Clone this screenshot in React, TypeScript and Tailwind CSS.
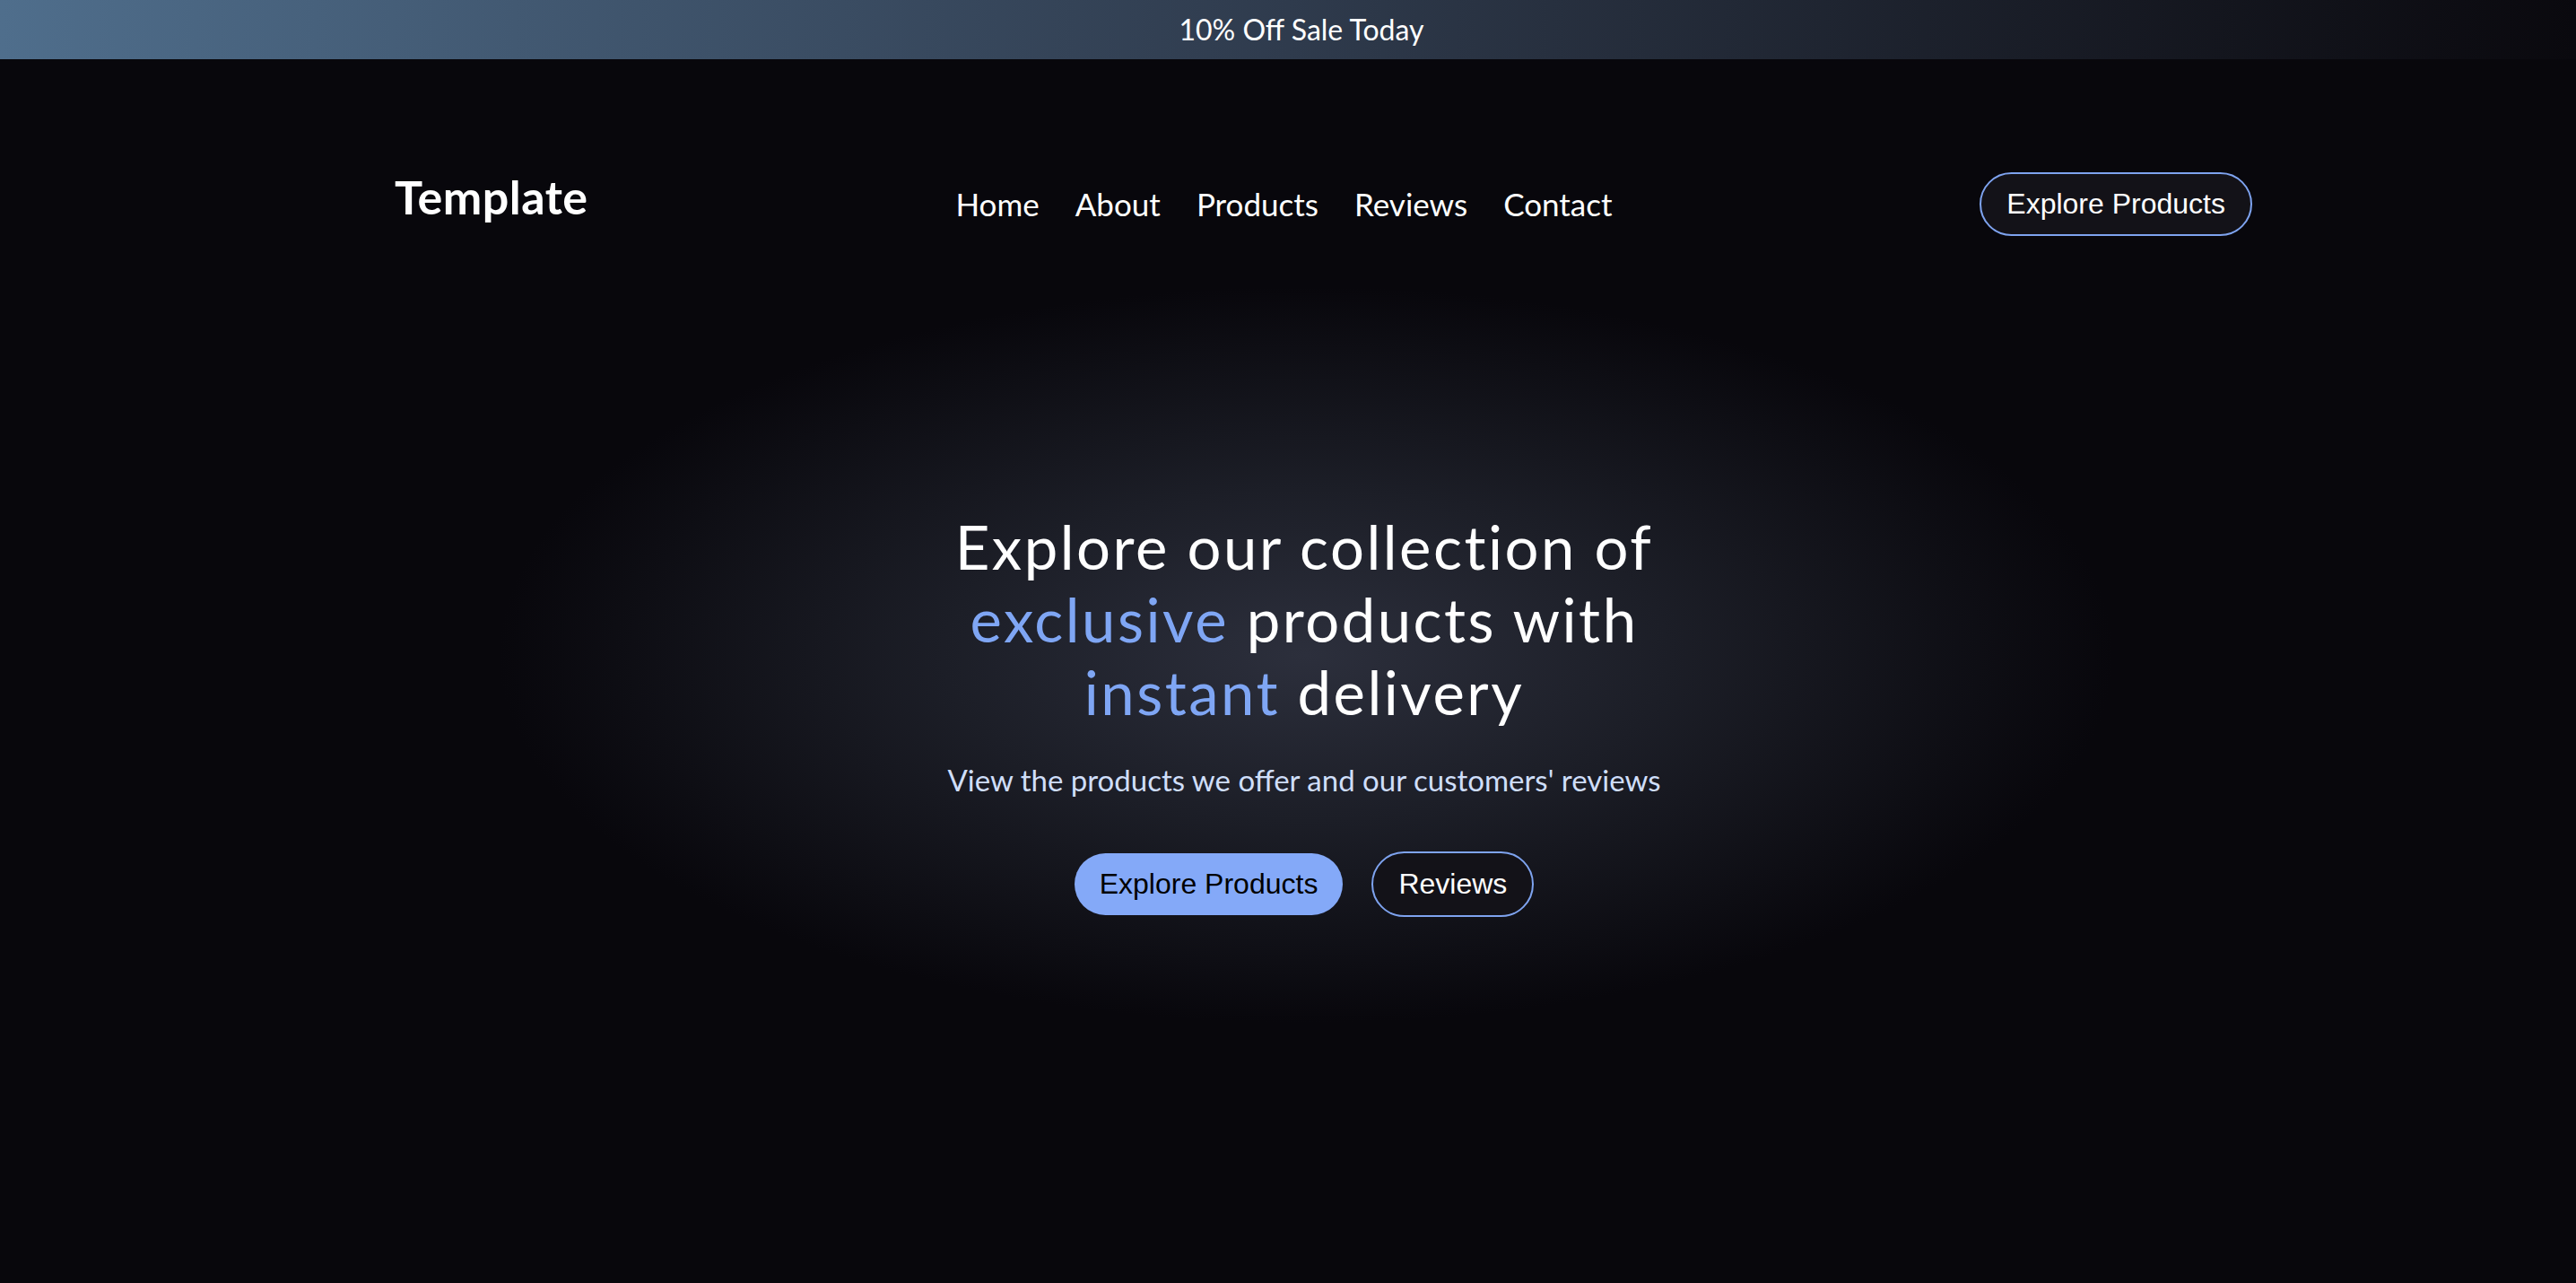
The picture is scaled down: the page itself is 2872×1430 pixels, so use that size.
import React from 'react';

const navLinks = ['Home', 'About', 'Products', 'Reviews', 'Contact'];

const App: React.FC = () => {
    return (
        <div className="min-h-screen bg-[#08070c] font-['Lato',sans-serif] text-white">
            {/* promo bar */}
            <div className="flex h-[66px] items-center justify-center bg-gradient-to-r from-[#4f6e8c] via-[#2f3b4d] to-[#0a090e] pl-[30px] text-[32px] leading-none">
                10% Off Sale Today
            </div>

            <div className="min-h-[1364px] bg-[radial-gradient(ellipse_900px_410px_at_1456px_664px,#2c2f3c_0%,#1c1e27_45%,#08070c_100%)]">
                <nav className="flex items-center justify-between pl-[440px] pr-[361px] pt-[126px]">
                    <span className="pb-[18px] text-[52px] font-bold leading-none tracking-[0.5px]">Template</span>
                    <ul className="flex items-center gap-[40px] text-[35px] leading-none">
                        {navLinks.map(link => (
                            <li key={link}>
                                <a href="#">{link}</a>
                            </li>
                        ))}
                    </ul>
                    <button className="rounded-full border-2 border-[#7ea3ef] bg-[#131218] px-[28px] py-[15px] font-['Liberation_Sans',Arial,sans-serif] text-[32px] leading-[37px] text-white">
                        Explore Products
                    </button>
                </nav>

                <section className="flex flex-col items-center pl-[36px] pt-[306px] text-center">
                    <h1 className="text-[67px] font-normal leading-[81px] tracking-[2.5px]">
                        Explore our collection of
                        <br />
                        <span className="text-[#7fa6f4]">exclusive</span> products with
                        <br />
                        <span className="text-[#7fa6f4]">instant</span> delivery
                    </h1>
                    <p className="mt-[37px] text-[33px] leading-[40px] text-[#cfdef9]">
                        View the products we offer and our customers' reviews
                    </p>
                    <div className="mt-[60px] flex items-center gap-[32px] font-['Liberation_Sans',Arial,sans-serif] text-[32px] leading-[37px]">
                        <button className="rounded-full bg-[#84a9f8] px-[28px] py-4 text-black">
                            Explore Products
                        </button>
                        <button className="rounded-full border-2 border-[#7ea3ef] bg-[#131218] px-[28px] py-4 text-white">
                            Reviews
                        </button>
                    </div>
                </section>
            </div>
        </div>
    );
};

export default App;
